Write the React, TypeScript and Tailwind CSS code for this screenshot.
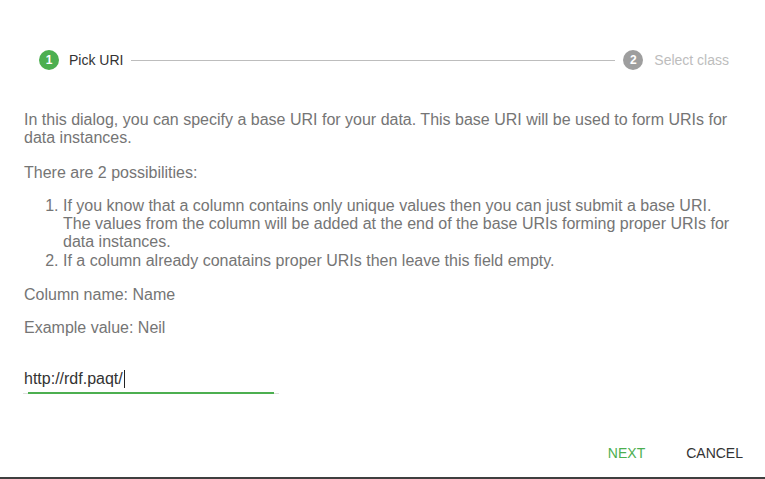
import React from "react";

const StepIcon = ({ n, active }: { n: number; active: boolean }) => (
  <span
    className={
      "flex h-5 w-5 items-center justify-center rounded-full text-[12px] font-bold text-white " +
      (active ? "bg-[#4caf50]" : "bg-[#9e9e9e]")
    }
  >
    {n}
  </span>
);

export default function App() {
  return (
    <div
      className="flex h-[479px] w-[765px] flex-col border-b-2 border-[#3f3f3f] bg-white text-[#757575]"
      style={{ fontFamily: '"Liberation Sans", Arial, sans-serif' }}
    >
      {/* stepper */}
      <div className="flex h-5 items-center pl-[39px] pr-[36px] mt-[50px]">
        <StepIcon n={1} active />
        <span className="ml-[10px] text-[14px] text-[#333]">Pick URI</span>
        <div className="mx-2 h-px flex-1 bg-[#bdbdbd]" />
        <StepIcon n={2} active={false} />
        <span className="ml-[11px] text-[14px] text-[#bdbdbd]">Select class</span>
      </div>

      {/* body */}
      <div className="mt-[41px] px-6 text-[16px] leading-[18px]">
        <p>
          In this dialog, you can specify a base URI for your data. This base URI will be used to form URIs for
          data instances.
        </p>
        <p className="mt-[17px]">There are 2 possibilities:</p>
        <ol className="mt-[15px] list-decimal pl-[39px]">
          <li>
            If you know that a column contains only unique values then you can just submit a base URI.
            <br />
            The values from the column will be added at the end of the base URIs forming proper URIs for
            <br />
            data instances.
          </li>
          <li className="mt-px">If a column already conatains proper URIs then leave this field empty.</li>
        </ol>
        <p className="mt-[16px]">Column name: Name</p>
        <p className="mt-[15px]">Example value: Neil</p>

        <div className="relative mt-[33px] w-[256px] -ml-px border-b border-[#e0e0e0] pb-[5px] pl-px">
          <span className="text-[#333]">http://rdf.paqt/</span>
          <span className="ml-px inline-block h-[18px] w-px bg-[#222] align-top" />
          <div className="absolute -bottom-px left-[5px] right-[5px] h-[2px] bg-[#4caf50]" />
        </div>
      </div>

      <div className="flex-1" />

      {/* actions */}
      <div className="flex justify-end gap-[9px] pb-[6px] pr-[6px]">
        <button className="h-9 min-w-16 px-4 text-[14px] uppercase text-[#4caf50]">Next</button>
        <button className="h-9 min-w-16 px-4 text-[14px] uppercase text-[#333]">Cancel</button>
      </div>
    </div>
  );
}
